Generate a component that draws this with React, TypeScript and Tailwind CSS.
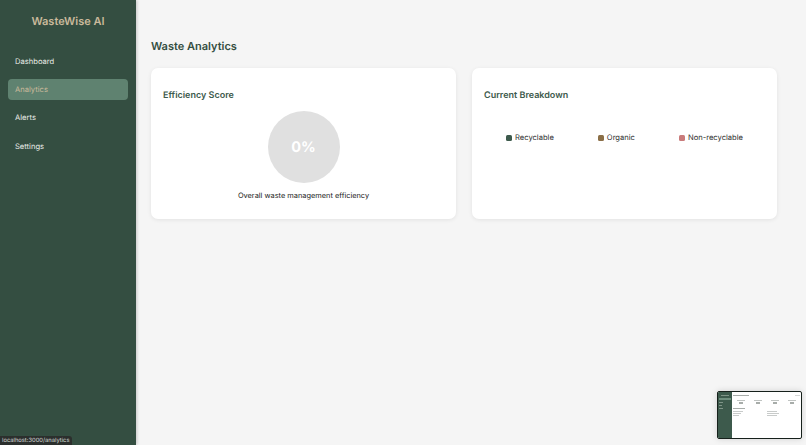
const navItems = ["Dashboard", "Analytics", "Alerts", "Settings"];

const legend = [
  { label: "Recyclable", color: "bg-[#3d5a4c]" },
  { label: "Organic", color: "bg-[#8b6f47]" },
  { label: "Non-recyclable", color: "bg-[#c97b7b]" },
];

const thumbCells = [0, 1, 2, 3];

const Sidebar = () => (
  <aside className="w-[136px] shrink-0 bg-[#344e41] shadow-[1px_0_3px_rgba(0,0,0,0.2)] px-[8px]">
    <h1 className="pt-[14px] text-center text-[11px] leading-[15px] font-semibold text-[#c9b99b]">
      WasteWise AI
    </h1>
    <nav className="mt-[21.5px] flex flex-col gap-[7.4px]">
      {navItems.map((item) => (
        <a
          key={item}
          className={
            item === "Analytics"
              ? "h-[21px] rounded-[4px] bg-[#5f8270] px-[7px] text-[7.6px] leading-[21px] text-[#c9b99b]"
              : "h-[21px] rounded-[4px] px-[7px] text-[7.6px] leading-[21px] text-[#e8ebe6]"
          }
        >
          {item}
        </a>
      ))}
    </nav>
  </aside>
);

const Card = ({ title, children }: { title: string; children: React.ReactNode }) => (
  <section className="h-[151px] rounded-[7px] bg-white px-[12px] pt-[21px] shadow-[0_1px_4px_rgba(0,0,0,0.08)]">
    <h3 className="text-[9px] leading-[13px] font-semibold text-[#3d5a4c]">{title}</h3>
    {children}
  </section>
);

export default function App() {
  return (
    <div className="relative flex h-[445px] w-[806px] overflow-hidden bg-[#f5f5f5] font-['Inter',sans-serif] [text-rendering:geometricPrecision]">
      <Sidebar />
      <main className="flex-1 pl-[15px] pr-[29px] pt-[39px]">
        <h2 className="text-[11px] leading-[15px] font-semibold text-[#344e41]">Waste Analytics</h2>
        <div className="mt-[14px] grid grid-cols-2 gap-[16px]">
          <Card title="Efficiency Score">
            <div className="mt-[9px] flex flex-col items-center">
              <div className="flex h-[72px] w-[72px] items-center justify-center rounded-full bg-[#e0e0e0] pt-[1px] text-[14.5px] font-bold text-white">
                0%
              </div>
              <p className="mt-[7px] text-[7.4px] leading-[12px] text-[#222]">
                Overall waste management efficiency
              </p>
            </div>
          </Card>
          <Card title="Current Breakdown">
            <div className="mt-[30px] flex justify-around">
              {legend.map((l) => (
                <div key={l.label} className="flex items-center gap-[3px]">
                  <span className={`h-[6px] w-[6px] rounded-[1.5px] ${l.color}`} />
                  <span className="text-[7.6px] leading-[12px] text-[#333]">{l.label}</span>
                </div>
              ))}
            </div>
          </Card>
        </div>
      </main>

      {/* status bar link preview */}
      <div className="absolute bottom-0 left-0 h-[9px] w-[72px] rounded-tr-[3px] bg-[#2b2f2d] pl-[2px] text-[5.8px] leading-[9px] text-[#d8dcd9]">
        localhost:3000/analytics
      </div>

      {/* minimap preview */}
      <div className="absolute left-[717px] top-[391px] flex h-[48px] w-[85px] overflow-hidden rounded-[2px] border-[1.5px] border-[#16201b] bg-white shadow-[0_0_6px_rgba(0,0,0,0.15)]">
        <div className="w-[14px] bg-[#3d5a4c] px-[1px] pt-[3px]">
          <div className="mx-auto h-[1px] w-[8px] bg-[#7f9487]" />
          <div className="mt-[2px] h-[2px] w-full bg-[#6f8f7e]" />
          <div className="mt-[2px] h-[1px] w-[4px] bg-[#7f9487]" />
          <div className="mt-[2px] h-[1px] w-[3px] bg-[#7f9487]" />
          <div className="mt-[2px] h-[1px] w-[4px] bg-[#7f9487]" />
        </div>
        <div className="flex-1 px-[1px] pt-[3px]">
          <div className="flex justify-between">
            <div className="h-[1px] w-[16px] bg-[#a8adaa]" />
            <div className="h-[1px] w-[5px] bg-[#d5d7d6]" />
          </div>
          <div className="mt-[3px] grid grid-cols-4 gap-[1px]">
            {thumbCells.map((c) => (
              <div key={c} className="flex h-[7px] flex-col items-center pt-[1px]">
                <div className="h-[1px] w-[8px] bg-[#c0c4c2]" />
                <div className="mt-[1px] h-[2px] w-[4px] bg-[#a8adaa]" />
              </div>
            ))}
          </div>
          <div className="mt-[2px] h-[1px] w-[12px] bg-[#a8adaa]" />
          <div className="mt-[2px] grid grid-cols-2 gap-y-[1px]">
            <div className="h-[1px] w-[10px] bg-[#c8cbca]" />
            <div className="h-[1px] w-[10px] bg-[#c8cbca]" />
            <div className="h-[1px] w-[8px] bg-[#c8cbca]" />
            <div className="h-[1px] w-[12px] bg-[#c8cbca]" />
            <div className="h-[1px] w-[6px] bg-[#c8cbca]" />
            <div className="h-[1px] w-[10px] bg-[#c8cbca]" />
          </div>
        </div>
      </div>
    </div>
  );
}
